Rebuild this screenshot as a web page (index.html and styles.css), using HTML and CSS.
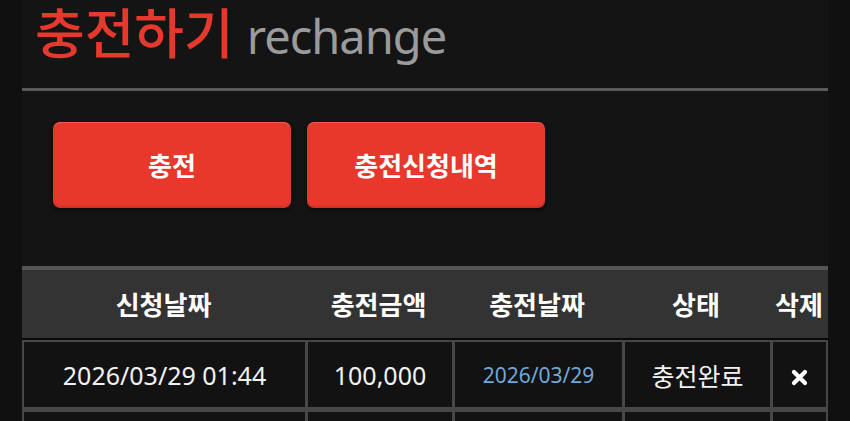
FILE: index.html
```
<!DOCTYPE html>
<html lang="ko">
<head>
	<meta charset="UTF-8">
	<meta name="viewport" content="width=device-width, initial-scale=1.0">
	<title>충전하기</title>
	<link rel="stylesheet" href="styles.css">
</head>
<body>
	<div class="wrap">
		<h2 class="title"><span class="ko">충전하기</span> <span class="en">rechange</span></h2>

		<div class="tabs">
			<a class="btn" href="#">충전</a>
			<a class="btn" href="#">충전신청내역</a>
		</div>

		<table class="list">
			<colgroup>
				<col style="width: 283px">
				<col style="width: 147px">
				<col style="width: 170px">
				<col style="width: 148px">
				<col style="width: 58px">
			</colgroup>
			<thead>
				<tr>
					<th>신청날짜</th>
					<th>충전금액</th>
					<th>충전날짜</th>
					<th>상태</th>
					<th>삭제</th>
				</tr>
			</thead>
			<tbody>
				<tr>
					<td>2026/03/29 01:44</td>
					<td>100,000</td>
					<td class="date">2026/03/29</td>
					<td>충전완료</td>
					<td><a class="del" href="#"><svg width="17" height="17" viewBox="0 0 17 17"><path d="M3 3L14 14M14 3L3 14" stroke="#fff" stroke-width="4.2" stroke-linecap="round"/></svg></a></td>
				</tr>
				<tr class="empty">
					<td></td>
					<td></td>
					<td></td>
					<td></td>
					<td></td>
				</tr>
			</tbody>
		</table>
	</div>
</body>
</html>
```

FILE: styles.css
```
html, body { margin: 0; padding: 0; background-color: #101010; overflow: hidden; }
body { font-family: "Noto Sans", "Noto Sans CJK KR", sans-serif; color: #fff; }

.wrap {
	margin: 0 22px;
	min-height: 421px;
	background-color: #141414;
}

.title {
	margin: 0;
	padding: 5px 0 0 13px;
	height: 83px;
	font-size: 50px;
	line-height: 60px;
	font-weight: normal;
	border-bottom: 3px solid #5a5a5a;
	white-space: nowrap;
}
.title .ko { color: #e6392d; font-family: "Liberation Sans", "Noto Sans CJK KR", sans-serif; font-size: 54px; font-weight: 500; }
.title .en { color: #9b9b9b; letter-spacing: -1px; font-size: 47px; }

.tabs {
	display: flex;
	gap: 16px;
	padding: 31px 0 0 31px;
}
.btn {
	display: flex;
	justify-content: center;
	align-items: center;
	width: 238px;
	height: 86px;
	border-radius: 7px;
	background-color: #e8382c;
	box-shadow: inset 0 1px 1px rgba(255, 255, 255, 0.2), inset 0 -2px 2px rgba(0, 0, 0, 0.12), 0 2px 4px rgba(0, 0, 0, 0.6);
	color: #fff;
	font-size: 26px;
	font-weight: bold;
	text-decoration: none;
}

.list {
	margin-top: 58px;
	width: 806px;
	table-layout: fixed;
	border-collapse: separate;
	border-spacing: 0;
	border-top: 4px solid #555;
}
.list th {
	height: 68px;
	padding: 0;
	background-color: #333;
	border-bottom: 2px solid #0a0a0a;
	font-size: 26px;
	font-weight: bold;
	color: #fff;
}
.list td {
	height: 65px;
	padding: 0;
	text-align: center;
	font-size: 25px;
	color: #f2f2f2;
	background-color: #121212;
	border: 2px solid #474747;
	border-top-width: 0;
	border-right-width: 0;
}
.list td:last-child { border-right-width: 2px; }
.list td + td { border-left-width: 3px; }
.list tbody tr:first-child td { border-top-width: 2px; }
.list tbody tr + tr td { border-top: 3px solid #474747; }
.list td.date { font-size: 21px; color: #6fa8da; }

.del { display: inline-flex; vertical-align: middle; }
```
